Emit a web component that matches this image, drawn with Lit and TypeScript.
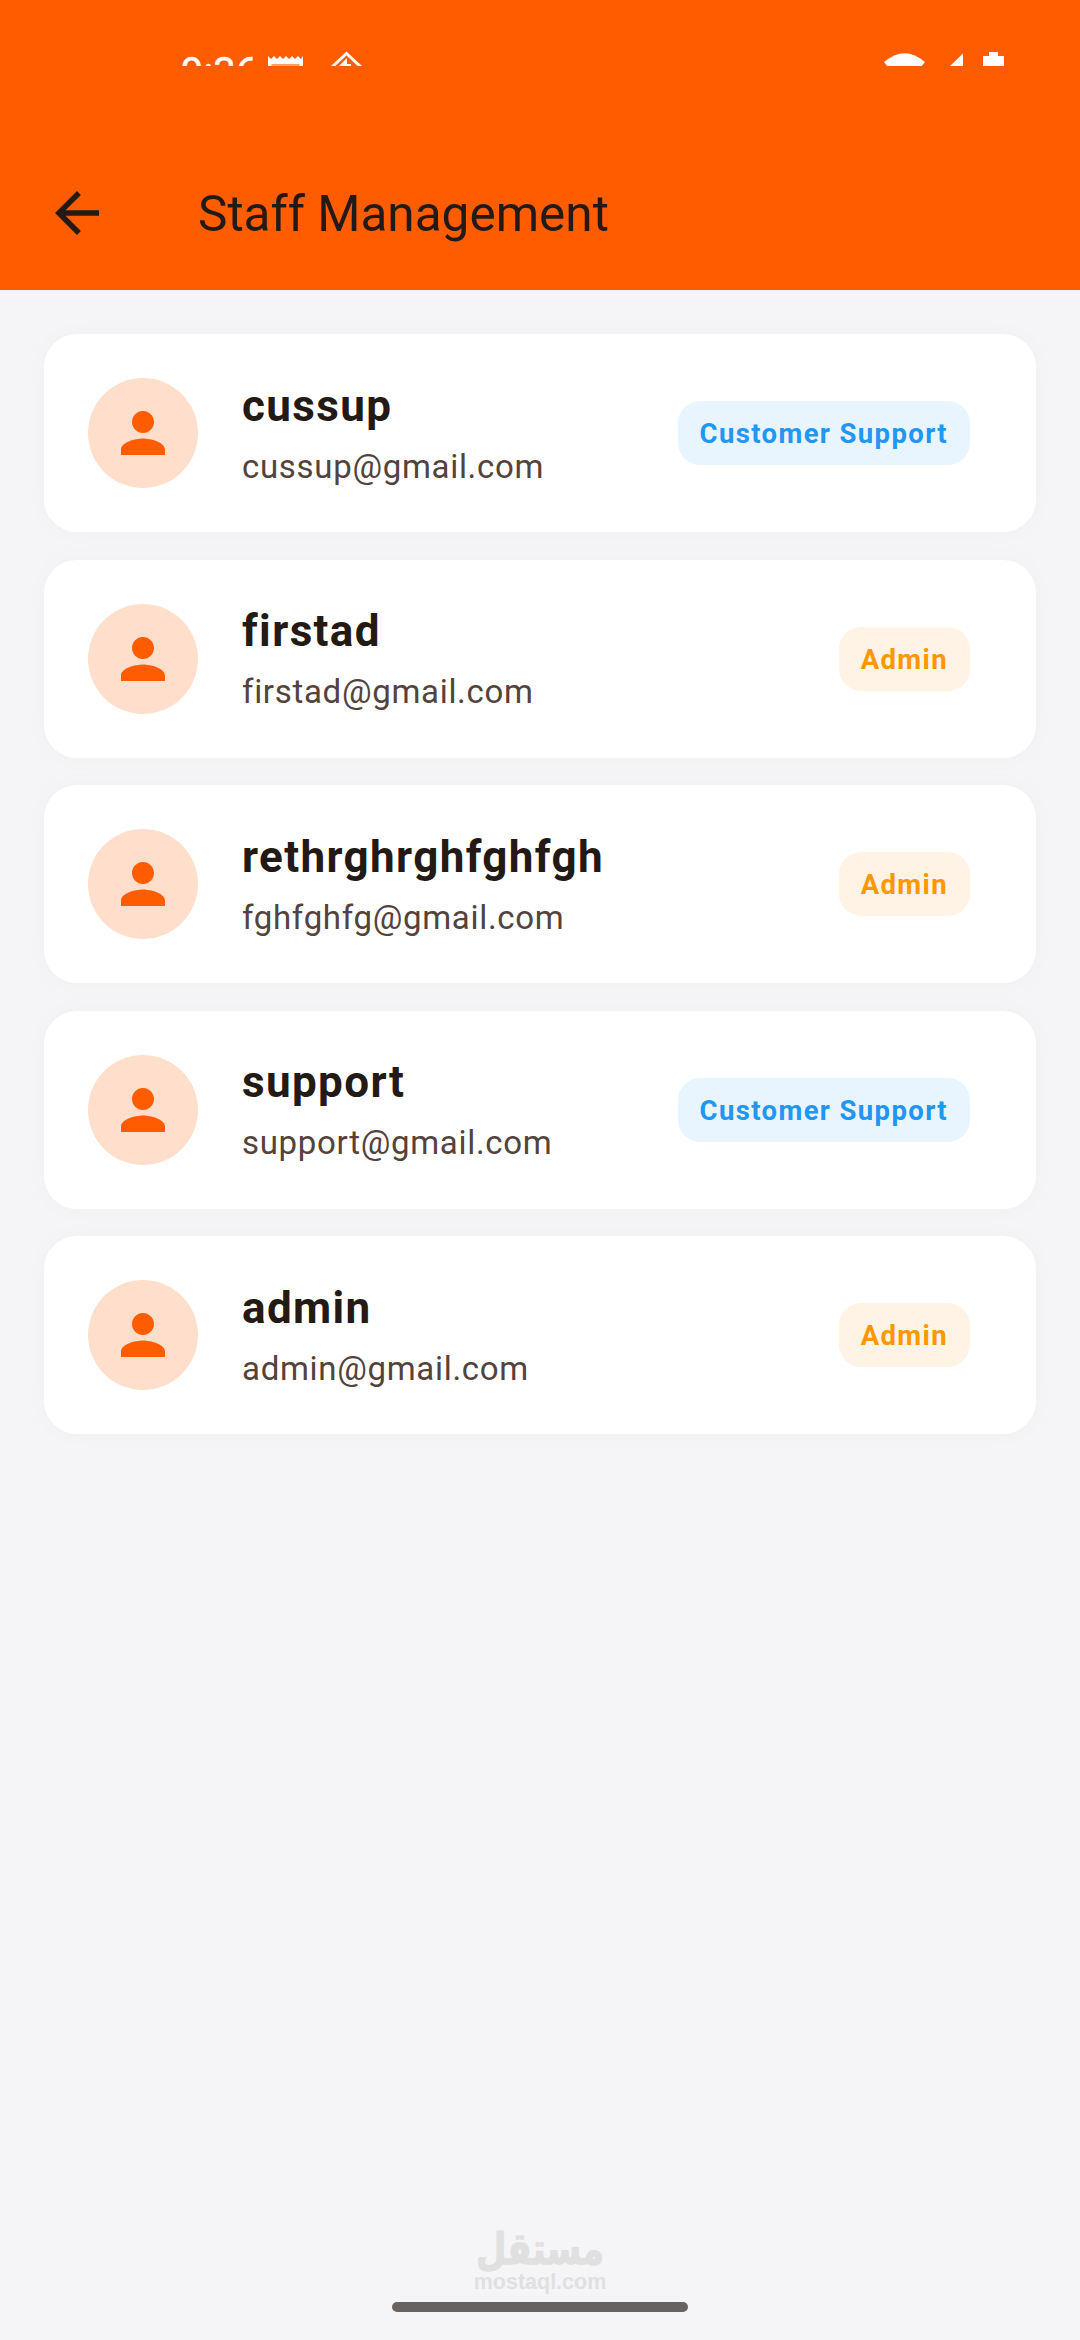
import { LitElement, html, css } from "lit";
import { customElement, state } from "lit/decorators.js";

interface Member {
  name: string;
  email: string;
  role: string;
  tone: "support" | "admin";
}

@customElement("status-bar")
export class StatusBar extends LitElement {
  static styles = css`
    :host { display: flex; justify-content: space-between; height: 66px; overflow: hidden; box-sizing: border-box; padding: 0 74px 0 181px; color: #fff; }
    .left { display: flex; }
    .time { font: 400 40px/48px Roboto, sans-serif; -webkit-text-stroke: 0.5px #fff; width: 87px; padding-top: 49px; white-space: nowrap; }
    svg { display: block; flex: none; fill: currentColor; }
  `;
  render() {
    return html`
      <div class="left">
        <span class="time">9:36</span>
        <svg width="102" height="100" viewBox="268 0 102 100">
          <path d="M268 56l3 3 3-3 3 3 3-3 3 3 3-3 3 3 3-3 3 3 3-3 3 3 2-3V94H268z" />
          <rect x="271.500" y="64" width="28" height="24" fill="#ff9d66" />
          <path d="M331 68L346.500 53.500 362 68" fill="none" stroke="#fff" stroke-width="3" />
          <path d="M337 68l10-10v6h4v4z" />
        </svg>
      </div>
      <svg width="122" height="100" viewBox="883 0 122 100">
        <path d="M883 62Q903.500 44.500 924 62L903.500 88z" />
        <path d="M949 66L962 53.500V88H927z" />
        <path d="M982 56h6v-4h9v4h6V90h-21z" />
      </svg>
    `;
  }
}

@customElement("staff-card")
export class StaffCard extends LitElement {
  static properties = { member: { attribute: false } };
  declare member: Member;
  static styles = css`
    :host { display: flex; align-items: center; box-sizing: border-box; height: 198px; padding: 0 66px 0 44px; background: #fff; border-radius: 33px; box-shadow: 0 0 27px rgba(0, 0, 0, 0.025); font-family: Roboto, sans-serif; }
    .avatar { display: flex; align-items: center; justify-content: center; flex: none; width: 110px; height: 110px; border-radius: 50%; background: #ffdfcc; margin-right: 44px; }
    .avatar svg { width: 66px; height: 66px; fill: #ff5c00; }
    .text { flex: 1; min-width: 0; }
    .name { font-size: 44px; line-height: 66px; font-weight: 700; letter-spacing: 1.375px; color: #231a15; }
    .email { font-size: 33px; line-height: 55px; letter-spacing: 0.6875px; color: #53433c; }
    .badge { flex: none; padding: 12px 22px 10px; border-radius: 22px; font-size: 27.5px; line-height: 42px; font-weight: 700; letter-spacing: 1.375px; }
    .support { color: #2196f3; background: #e9f5fe; }
    .admin { color: #ff9800; background: #fff3e6; }
  `;
  render() {
    const m = this.member;
    return html`
      <div class="avatar">
        <svg viewBox="0 0 24 24"><path d="M12 12c2.210 0 4-1.790 4-4s-1.790-4-4-4-4 1.790-4 4 1.790 4 4 4zm0 2c-2.670 0-8 1.340-8 4v2h16v-2c0-2.660-5.330-4-8-4z" /></svg>
      </div>
      <div class="text">
        <div class="name">${m.name}</div>
        <div class="email">${m.email}</div>
      </div>
      <div class="badge ${m.tone}">${m.role}</div>
    `;
  }
}

@customElement("app-root")
export class AppRoot extends LitElement {
  @state() private members: Member[] = [
    { name: "cussup", email: "cussup@gmail.com", role: "Customer Support", tone: "support" },
    { name: "firstad", email: "firstad@gmail.com", role: "Admin", tone: "admin" },
    { name: "rethrghrghfghfgh", email: "fghfghfg@gmail.com", role: "Admin", tone: "admin" },
    { name: "support", email: "support@gmail.com", role: "Customer Support", tone: "support" },
    { name: "admin", email: "admin@gmail.com", role: "Admin", tone: "admin" },
  ];
  static styles = css`
    :host { display: flex; flex-direction: column; width: 1080px; height: 2340px; overflow: hidden; background: #f5f5f7; font-family: Roboto, sans-serif; }
    .header { display: flex; flex-direction: column; justify-content: space-between; flex: none; height: 290px; background: #ff5c00; color: #231a15; }
    .toolbar { display: flex; align-items: center; height: 154px; padding-left: 44px; }
    .back { width: 66px; height: 66px; margin-right: 88px; fill: currentColor; }
    .title { margin: 0; padding-top: 2px; font-size: 49.5px; font-weight: 400; line-height: 64px; }
    .list { flex: 1; display: flex; flex-direction: column; gap: 27.5px; padding: 44px; }
    .footer { display: flex; flex-direction: column; align-items: center; flex: none; height: 110px; color: #e0e0e0; }
    .brand { font: 700 35px/38px "DejaVu Sans", sans-serif; height: 40px; transform: scaleY(1.25); -webkit-text-stroke: 1px #e0e0e0; }
    .site { font: 700 21.500px/25px "Liberation Sans", sans-serif; height: 32px; }
    .handle { width: 296px; height: 10px; border-radius: 5px; background: #686360; }
  `;
  render() {
    return html`
      <header class="header">
        <status-bar></status-bar>
        <div class="toolbar">
          <svg class="back" viewBox="0 0 24 24"><path d="M20 11H7.830l5.590-5.590L12 4l-8 8 8 8 1.410-1.410L7.830 13H20v-2z" /></svg>
          <h1 class="title">Staff Management</h1>
        </div>
      </header>
      <main class="list">${this.members.map((m) => html`<staff-card .member=${m}></staff-card>`)}</main>
      <footer class="footer">
        <div class="brand" dir="rtl">مستقل</div>
        <div class="site">mostaql.com</div>
        <div class="handle"></div>
      </footer>
    `;
  }
}
